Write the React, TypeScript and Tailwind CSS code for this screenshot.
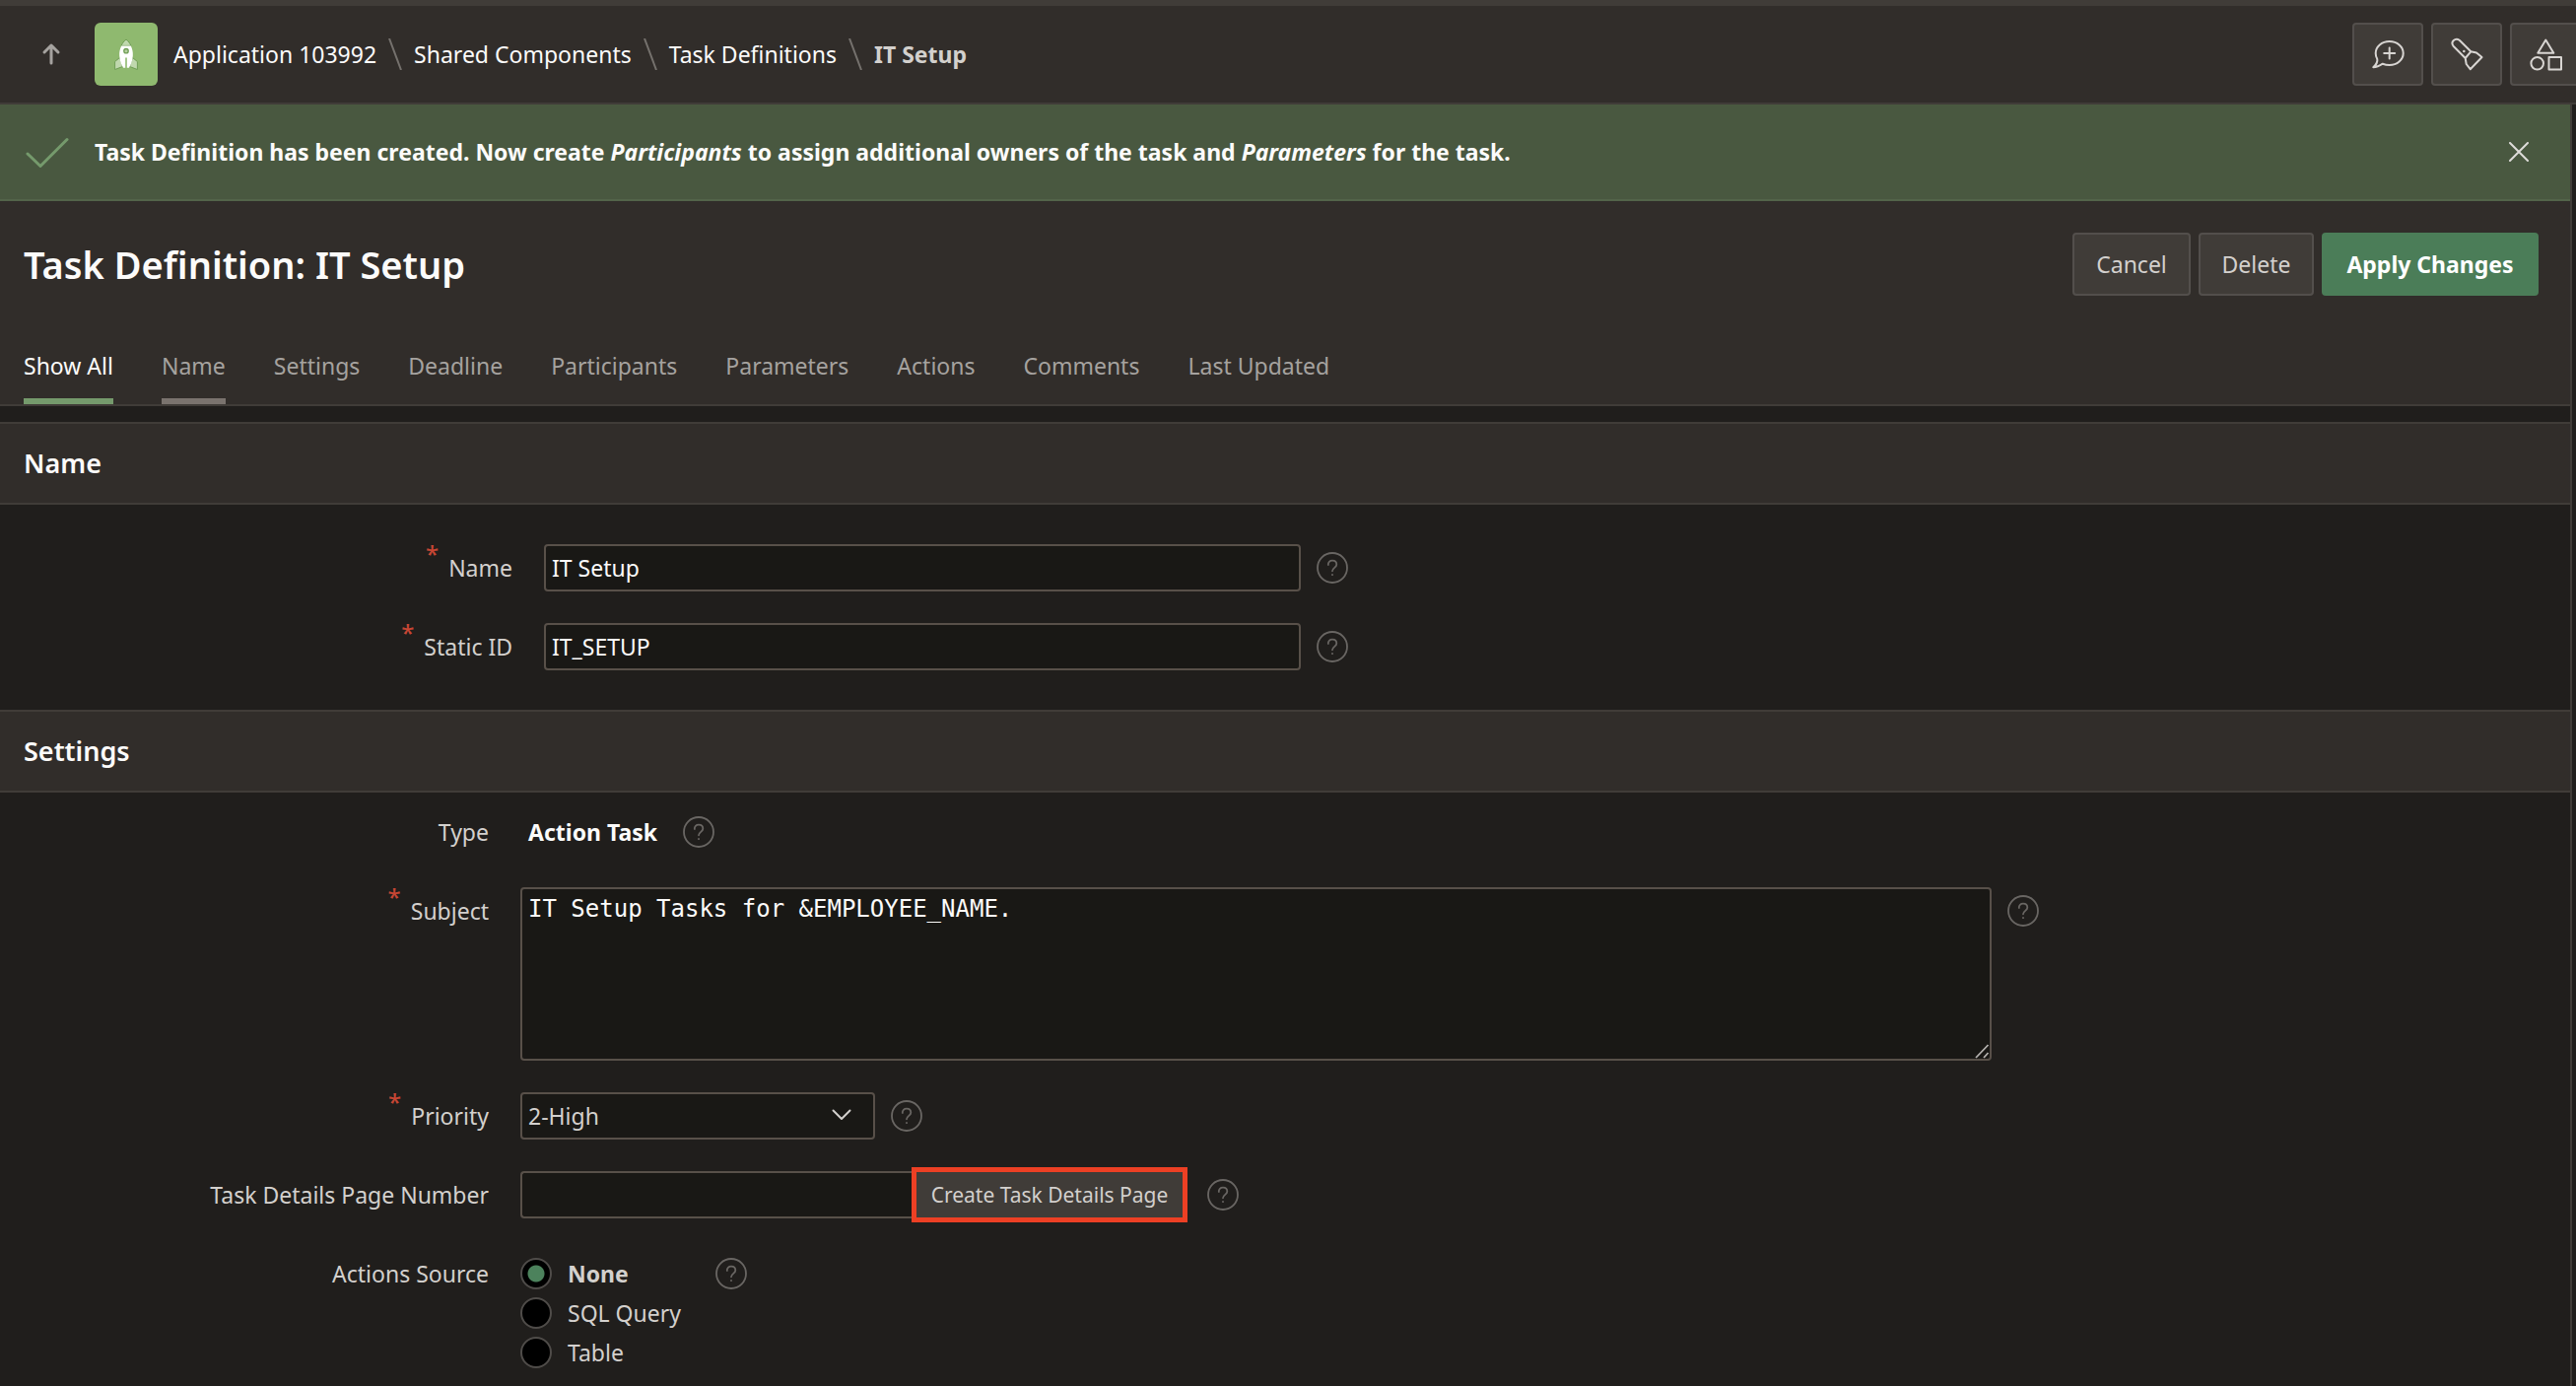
import React, { useState } from 'react';
import type { ReactNode } from 'react';

const crumbs = ['Application 103992', 'Shared Components', 'Task Definitions'];
const tabs = [
  'Show All',
  'Name',
  'Settings',
  'Deadline',
  'Participants',
  'Parameters',
  'Actions',
  'Comments',
  'Last Updated',
];

function UpIcon() {
  return (
    <svg viewBox="0 0 24 24" className="size-6" fill="none" stroke="currentColor" strokeWidth="3" strokeLinecap="round" strokeLinejoin="round" aria-hidden="true">
      <path d="M12 21V3M5 10l7-7 7 7" />
    </svg>
  );
}

function RocketIcon() {
  return (
    <svg viewBox="0 0 32 32" className="size-8" stroke="#6f9d55" strokeWidth="1" strokeLinejoin="round" aria-hidden="true">
      <path d="M9.5 19.5L4.6 23.5V31.5L12.5 28.5ZM22.5 19.5L27.4 23.5V31.5L19.5 28.5Z" fill="#c0d8ae" />
      <path d="M16 1C13.5 3 12 5 11.2 7.4H20.8C20 5 18.5 3 16 1Z" fill="#c0d8ae" />
      <path d="M11.2 7.6H20.8C22.4 11 23 14 22.8 17.5C22.6 22 21 27 18.8 29.8H13.2C11 27 9.4 22 9.2 17.5C9 14 9.6 11 11.2 7.6Z" fill="#ffffff" stroke="none" />
      <circle cx="16" cy="12.7" r="2.2" fill="#b5d09f" strokeWidth="1.3" />
      <path d="M16 19.5V31.5" strokeWidth="1.6" stroke="#8fb96f" />
    </svg>
  );
}

function ChatPlusIcon() {
  return (
    <svg viewBox="0 0 36 36" className="size-9" fill="none" stroke="currentColor" strokeWidth="2" strokeLinecap="round" strokeLinejoin="round" aria-hidden="true">
      <path d="M7.3 23C6.2 21.2 5.7 19.2 5.7 17C5.7 10.3 12 5 19.7 5S33.7 10.3 33.7 17S27.5 29 19.7 29C17 29 14.8 28.5 12.8 27.7C10 29.6 6.5 31.2 3.3 31.2C6 28.5 8 26.500 7.3 23Z" />
      <path d="M19.700 11.500v11M14.200 17h11" />
    </svg>
  );
}

function TorchIcon() {
  return (
    <svg viewBox="0 0 36 36" className="size-9" fill="none" stroke="currentColor" strokeWidth="2" strokeLinecap="round" strokeLinejoin="round" aria-hidden="true">
      <path d="M16.7 22L4.5 9.7C1.3 5.5 6.5 0.8 10.7 3.7L22.3 15.3ZM22.3 15.3L28 16.5L33.5 21L21.7 33.2L17.7 28L16.7 22" />
      <path d="M15.3 15v.1" strokeWidth="2.5" />
    </svg>
  );
}

function ShapesIcon() {
  return (
    <svg viewBox="0 0 36 36" className="size-9 shrink-0" fill="none" stroke="currentColor" strokeWidth="2" strokeLinejoin="round" aria-hidden="true">
      <path d="M18.3 3.5L26.3 16.8H10.3Z" />
      <circle cx="9.7" cy="27.3" r="6.3" />
      <rect x="21.5" y="21" width="12.5" height="12.5" />
    </svg>
  );
}

function IconButton({ label, children }: { label: string; children: ReactNode }) {
  return (
    <button type="button" aria-label={label} className="flex h-16 w-[72px] shrink-0 items-center justify-center rounded border-2 border-[#534f4c] bg-[#403c38] text-[#d8d5d2]">
      {children}
    </button>
  );
}

function Help({ topic }: { topic: string }) {
  return (
    <button type="button" aria-label={`Help: ${topic}`} className="flex h-12 shrink-0 items-center text-[#696663]">
      <svg viewBox="0 0 32 32" className="size-8" fill="none" stroke="currentColor" strokeWidth="1.8" strokeLinecap="round" aria-hidden="true">
        <circle cx="16" cy="16" r="15" />
        <path d="M11.8 13C11.6 10.3 13.4 8.7 16 8.7S20.3 10.4 20.3 12.8C20.3 15.8 16 16 16 19.3" />
        <path d="M16 23v.2" />
      </svg>
    </button>
  );
}

function Row({ label, htmlFor, required, children }: { label: string; htmlFor?: string; required?: boolean; children: ReactNode }) {
  return (
    <div className="flex items-start py-4">
      <div className="flex h-12 w-[528px] shrink-0 items-center justify-end gap-2.5 pr-8">
        {required && <span className="self-start text-2xl leading-5 font-medium text-[#c74634]">*</span>}
        <label htmlFor={htmlFor} className="text-[#d3d0cd]">
          {label}
        </label>
      </div>
      {children}
    </div>
  );
}

function SectionHeading({ children }: { children: ReactNode }) {
  return (
    <h2 className="flex h-[84px] items-center border-y-2 border-[#403c38] bg-[#312d2a] px-6 text-[27px] font-semibold text-[#fcfbfa]">
      {children}
    </h2>
  );
}

export default function App() {
  const [tab, setTab] = useState('Show All');
  const [source, setSource] = useState('None');

  return (
    <div className="flex min-h-screen flex-col overflow-hidden border-t-[6px] border-[#403c38] bg-[#201e1c] font-['Noto_Sans',sans-serif] text-[23px] leading-8">
      <header className="flex h-[100px] items-center border-b-2 border-[#403c38] bg-[#312d2a] pl-10">
        <a href="#up" aria-label="Up one level" className="mr-8 text-[#a5a29f]">
          <UpIcon />
        </a>
        <a href="#application" aria-label="Application" className="mr-4 flex size-16 items-center justify-center rounded-md bg-[#8fb96f]">
          <RocketIcon />
        </a>
        <nav aria-label="Breadcrumb" className="flex items-center gap-3">
          {crumbs.map((crumb) => (
            <React.Fragment key={crumb}>
              <a href="#crumb" className="text-[#fcfbfa]">
                {crumb}
              </a>
              <svg viewBox="0 0 14 32" className="h-8 w-3.5" stroke="#75716d" strokeWidth="2" aria-hidden="true">
                <path d="M1 0L13 32" />
              </svg>
            </React.Fragment>
          ))}
          <span className="font-bold text-[#d3d0cd]">IT Setup</span>
        </nav>
        <div className="-mr-[5px] ml-auto flex gap-2">
          <IconButton label="Feedback">
            <ChatPlusIcon />
          </IconButton>
          <IconButton label="Search">
            <TorchIcon />
          </IconButton>
          <IconButton label="Shared components">
            <ShapesIcon />
          </IconButton>
        </div>
      </header>

      <main className="mr-1 flex-1 border-r-2 border-[#403c38]">
        <div role="status" className="flex h-[98px] items-center border-b-2 border-[#53644a] bg-[#495840] pr-[42px] pl-6 text-[#fcfbfa]">
          <svg viewBox="0 0 48 32" className="mr-6 h-8 w-12" fill="none" stroke="#759a6c" strokeWidth="3" strokeLinecap="round" strokeLinejoin="round" aria-hidden="true">
            <path d="M4 18l13 12.500L44 3.500" />
          </svg>
          <p className="font-bold">
            Task Definition has been created. Now create <em>Participants</em> to assign additional owners of the task and{' '}
            <em>Parameters</em> for the task.
          </p>
          <button type="button" aria-label="Dismiss" className="ml-auto text-[#dedcd9]">
            <svg viewBox="0 0 20 20" className="size-5" fill="none" stroke="currentColor" strokeWidth="2" strokeLinecap="round" aria-hidden="true">
              <path d="M1 1l18 18M19 1L1 19" />
            </svg>
          </button>
        </div>

        <div className="border-b-2 border-[#403c38] bg-[#312d2a] px-6 pt-8">
          <div className="-mr-6 flex items-center gap-2 pr-8">
            <h1 className="mr-auto text-[38px] leading-[48px] font-semibold text-[#fcfbfa]">Task Definition: IT Setup</h1>
            <button type="button" className="h-16 w-[120px] rounded border-2 border-[#534f4c] bg-[#403c38] text-[#d3d0cd]">
              Cancel
            </button>
            <button type="button" className="h-16 w-[117px] rounded border-2 border-[#534f4c] bg-[#403c38] text-[#d3d0cd]">
              Delete
            </button>
            <button type="button" className="h-16 w-[220px] rounded bg-[#4b7d58] font-bold text-white">
              Apply Changes
            </button>
          </div>
          <div role="tablist" className="mt-8 flex gap-[49px]">
            {tabs.map((name) => (
              <button
                key={name}
                type="button"
                role="tab"
                aria-selected={tab === name}
                onClick={() => setTab(name)}
                className={
                  tab === name
                    ? 'h-[78px] border-b-[6px] border-[#759a6c] pt-1.5 text-[#fcfbfa]'
                    : name === 'Name'
                      ? 'h-[78px] border-b-[6px] border-[#7a736e] pt-1.5 text-[#a5a29f]'
                      : 'h-[78px] border-b-[6px] border-transparent pt-1.5 text-[#a5a29f]'
                }
              >
                {name}
              </button>
            ))}
          </div>
        </div>

        <section className="mt-4">
          <SectionHeading>Name</SectionHeading>
          <div className="p-6">
            <Row label="Name" htmlFor="name" required>
              <input id="name" defaultValue="IT Setup" className="mr-4 h-12 w-[768px] rounded border-2 border-[#585049] bg-[#191815] px-1.5 text-[#fcfbfa]" />
              <Help topic="Name" />
            </Row>
            <Row label="Static ID" htmlFor="static-id" required>
              <input id="static-id" defaultValue="IT_SETUP" className="mr-4 h-12 w-[768px] rounded border-2 border-[#585049] bg-[#191815] px-1.5 text-[#fcfbfa]" />
              <Help topic="Static ID" />
            </Row>
          </div>
        </section>

        <section>
          <SectionHeading>Settings</SectionHeading>
          <Row label="Type">
            <span className="flex h-12 items-center pr-[26px] pl-2 font-bold text-[#fcfbfa]">Action Task</span>
            <Help topic="Type" />
          </Row>
          <Row label="Subject" htmlFor="subject" required>
            <div className="relative mr-4 flex">
              <textarea
                id="subject"
                defaultValue="IT Setup Tasks for &EMPLOYEE_NAME."
                className="h-44 w-[1493px] resize-none rounded border-2 border-[#585049] bg-[#191815] px-1.5 py-1 font-['DejaVu_Sans_Mono',monospace] text-2xl leading-8 text-[#fcfbfa]"
              />
              <svg viewBox="0 0 16 16" className="absolute right-0.5 bottom-0.5 size-4" stroke="#b5b2af" strokeWidth="1.8" aria-hidden="true">
                <path d="M2 15L14.500 2M10 15l4.500-5" />
              </svg>
            </div>
            <Help topic="Subject" />
          </Row>
          <Row label="Priority" htmlFor="priority" required>
            <div className="relative mr-4 flex">
              <select id="priority" defaultValue="2-High" className="h-12 w-[360px] appearance-none rounded border-2 border-[#585049] bg-[#191815] px-1.5 text-[#d3d0cd]">
                <option>1-Urgent</option>
                <option>2-High</option>
                <option>3-Medium</option>
                <option>4-Low</option>
                <option>5-Lowest</option>
              </select>
              <svg viewBox="0 0 20 12" className="pointer-events-none absolute top-[17px] right-6 h-3 w-5" fill="none" stroke="#d3d0cd" strokeWidth="2" strokeLinecap="round" strokeLinejoin="round" aria-hidden="true">
                <path d="M1.500 1.500l8.500 8.500 8.500-8.500" />
              </svg>
            </div>
            <Help topic="Priority" />
          </Row>
          <Row label="Task Details Page Number" htmlFor="details-page">
            <input id="details-page" className="h-12 w-[401px] rounded-l border-2 border-r-0 border-[#585049] bg-[#191815] px-1.5 text-[#fcfbfa]" />
            <button type="button" className="mr-6 h-12 w-[272px] bg-[#403c38] text-[21px] text-[#d3d0cd] outline-[5px] -outline-offset-1 outline-[#ed4024] outline-solid">
              Create Task Details Page
            </button>
            <Help topic="Task Details Page Number" />
          </Row>
          <div className="flex items-start pt-4">
            <span id="actions-source" className="flex h-12 w-[528px] shrink-0 items-center justify-end pr-8 text-[#d3d0cd]">
              Actions Source
            </span>
            <div role="radiogroup" aria-labelledby="actions-source" className="mr-4 w-[182px] pt-1">
              {['None', 'SQL Query', 'Table'].map((name) => (
                <label key={name} className="flex h-10 items-center gap-4 text-[#d3d0cd] has-checked:font-bold">
                  <input
                    type="radio"
                    name="actions-source"
                    checked={source === name}
                    onChange={() => setSource(name)}
                    className="size-8 appearance-none rounded-full border-2 border-[#4f4c49] bg-black checked:bg-[radial-gradient(circle,#4c825c_8px,#000_9px)]"
                  />
                  {name}
                </label>
              ))}
            </div>
            <Help topic="Actions Source" />
          </div>
        </section>
      </main>
    </div>
  );
}
